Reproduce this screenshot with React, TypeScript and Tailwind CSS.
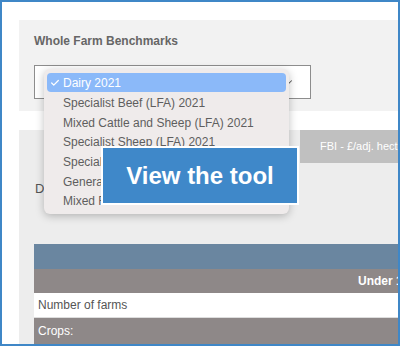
import { Check, ChevronDown } from 'lucide-react'

const options = [
  'Dairy 2021',
  'Specialist Beef (LFA) 2021',
  'Mixed Cattle and Sheep (LFA) 2021',
  'Specialist Sheep (LFA) 2021',
  'Specialist Sheep (Lowland) 2021',
  'General Cropping 2021',
  'Mixed Farms 2021',
]

export default function App() {
  return (
    <div className="relative w-[400px] h-[346px] overflow-hidden border-2 border-[#3f87c7] bg-white font-['Liberation_Sans',Arial,sans-serif]">
      <div className="flex flex-col pl-[17px] pt-[18px] h-full">
        {/* Benchmarks picker */}
        <div className="h-[93px] bg-[#f2f2f2] pl-[15px] pt-[13px]">
          <h2 className="text-[12px] leading-[16px] font-bold text-[#666]">Whole Farm Benchmarks</h2>
          <div className="mt-[16px] w-[277px] h-[34px] border border-[#8d8d8d] bg-white flex items-center justify-end pr-[16px]">
            <ChevronDown className="w-[10px] h-[10px] text-[#555]" strokeWidth={2.5} />
          </div>
        </div>

        <div className="h-[19px]" />

        {/* Results */}
        <div className="flex-1 bg-[#ededed]">
          <div className="flex justify-end">
            <div className="w-[98px] h-[33px] bg-[#c0c0c0] flex items-center pl-[20px] text-[11px] text-white whitespace-nowrap overflow-hidden">
              FBI - £/adj. hectare
            </div>
          </div>
          <div className="pl-[16px] pt-[18px] text-[13px] leading-[16px] text-[#555]">Dairy 2021</div>
          <div className="ml-[15px] mt-[47px] w-[400px] text-[12px]">
            <div className="h-[25px] bg-[#6a86a0]" />
            <div className="h-[24px] bg-[#8e8888] flex items-center pl-[324px] font-bold text-white whitespace-nowrap">
              Under 100 cows
            </div>
            <div className="h-[25px] bg-white border-b border-[#ddd] flex items-center pl-[4px] text-[#555]">
              Number of farms
            </div>
            <div className="h-[26px] bg-[#8e8888] flex items-center pl-[4px] text-white">Crops:</div>
          </div>
        </div>
      </div>

      {/* Native select menu */}
      <div className="absolute left-[42px] top-[67px] w-[245px] h-[145px] rounded-[6px] bg-[#efebeb] shadow-[0_2px_8px_rgba(0,0,0,0.25)] px-[3px] pt-[4px] overflow-hidden">
        {options.map((o, i) => (
          <div
            key={o}
            className={
              i === 0
                ? 'h-[19px] mb-[1px] rounded-[4px] bg-[#8bb9f9] flex items-center text-white text-[12px] whitespace-nowrap'
                : 'h-[19.7px] flex items-center text-[#5e5e5e] text-[12px] whitespace-nowrap'
            }
          >
            <span className="w-[14px] pl-[3px] flex items-center">
              {i === 0 && <Check className="w-[10px] h-[10px]" strokeWidth={3} />}
            </span>
            <span className="pl-[2px]">{o}</span>
          </div>
        ))}
      </div>

      {/* Call to action */}
      <div className="absolute left-[99px] top-[144px] w-[198px] h-[59px] border-2 border-white bg-[#3f88c9] flex items-center justify-center text-white text-[24px] font-bold">
        View the tool
      </div>
    </div>
  )
}
